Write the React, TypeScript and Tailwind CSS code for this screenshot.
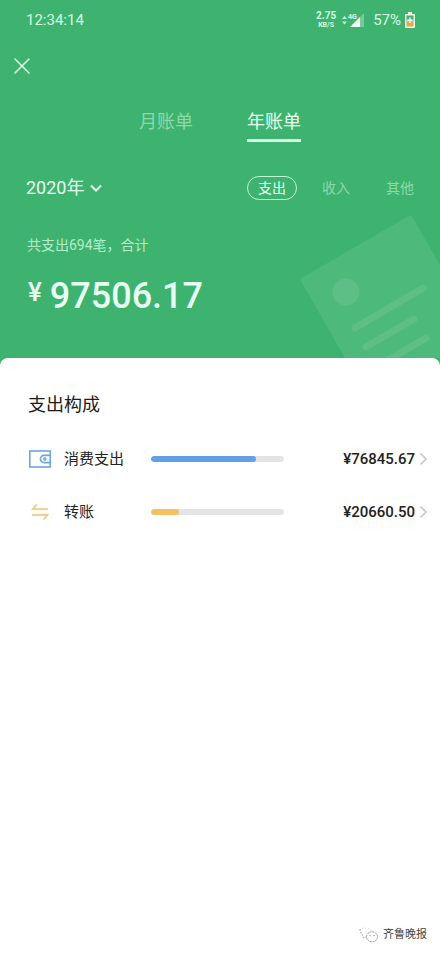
import { useState } from 'react';

interface Category {
  id: string;
  label: string;
  amount: string;
  percent: number;
  barClass: string;
  icon: React.ReactNode;
}

const WalletIcon = () => (
  <svg width="24" height="20" viewBox="0 0 24 20" fill="none" stroke="#6aa6df" strokeWidth="1.6" aria-hidden="true">
    <rect x="1.8" y="2" width="20.4" height="16" />
    <path d="M22 6.4h-6a3.6 3.6 0 0 0 0 7.2H22" />
    <circle cx="16.8" cy="10" r="1.7" fill="#6aa6df" stroke="none" />
  </svg>
);

const TransferIcon = () => (
  <svg width="24" height="20" viewBox="0 0 24 20" fill="none" stroke="#f0cc80" strokeWidth="1.8" aria-hidden="true">
    <path d="M8.6 2.2 4.8 7.2H20" />
    <path d="M4 12.8h15.4l-3.8 5" />
  </svg>
);

const categories: Category[] = [
  {
    id: 'spending',
    label: '消费支出',
    amount: '¥76845.67',
    percent: 78.8,
    barClass: 'bg-[#629fe6]',
    icon: <WalletIcon />,
  },
  {
    id: 'transfer',
    label: '转账',
    amount: '¥20660.50',
    percent: 21.2,
    barClass: 'bg-[#f2c262]',
    icon: <TransferIcon />,
  },
];

const periods = ['月账单', '年账单'];
const types = ['支出', '收入', '其他'];

const StatusBar = () => (
  <div className="flex h-10 items-center pl-[26px] pr-[25px] text-[15px] leading-5 text-[#d5fbe2]">
    <span>12:34:14</span>
    <div className="ml-auto flex items-center">
      <div className="text-center font-bold">
        <div className="text-[10px] leading-[10px]">2.75</div>
        <div className="text-[7px] leading-[8px]">KB/S</div>
      </div>
      <svg className="ml-1.5" width="23" height="16" viewBox="0 0 23 16" aria-hidden="true">
        <path d="M0 7l2.5-3L5 7zM0 9.5l2.5 3 2.5-3z" fill="#bff0d0" />
        <path d="M22 1v14H8z" fill="#fff" fillOpacity="0.3" />
        <path d="M18 5v10H8z" fill="#f0fff5" />
        <text x="6" y="6.5" fontSize="7" fontWeight="700" fill="#e3ffec">4G</text>
      </svg>
      <span className="ml-2">57%</span>
      <svg className="ml-1" width="10" height="16" viewBox="0 0 10 16" aria-hidden="true">
        <path d="M3 0h4v2h2a1 1 0 0 1 1 1v12a1 1 0 0 1-1 1H1a1 1 0 0 1-1-1V3a1 1 0 0 1 1-1h2z" fill="#e8fbe4" />
        <path d="M1.5 3.5h7v6h-7z" fill="#3eb370" />
        <path d="M1.5 9.5h7v5h-7z" fill="#e6a550" />
        <path d="M4.3 5.5h1.4v2h2v1.6h-2v2H4.3v-2h-2V7.5h2z" fill="#fff" />
      </svg>
    </div>
  </div>
);

const CardIllustration = () => (
  <svg className="absolute bottom-0 right-0" width="140" height="143" viewBox="0 0 140 143" aria-hidden="true">
    <path d="M2.5 62.5 109 .8q2-1 3.2 1L140 50v93H45L1 66q-1-2 1.5-3.5z" fill="#fff" fillOpacity="0.08" />
    <circle cx="46" cy="77" r="13.5" fill="#fff" fillOpacity="0.09" />
    <g stroke="#fff" strokeOpacity="0.09" strokeWidth="7" strokeLinecap="round">
      <path d="M55 113 123 73" />
      <path d="M66 132 114 104" />
      <path d="M78 151 126 123" />
    </g>
  </svg>
);

const WatermarkIcon = () => (
  <svg width="20" height="16" viewBox="0 0 20 16" fill="none" stroke="#8a8a8a" strokeWidth="0.9" aria-hidden="true">
    <path d="M1 2c0 3 1 5 3.5 7L4 11l2.5-1" strokeDasharray="1.5 1.5" />
    <path d="M3 1.5C6 .5 10 1 12 4" stroke="#c4c4c4" strokeDasharray="1 2" />
    <ellipse cx="13" cy="9.8" rx="5.5" ry="5" fill="#fff" strokeDasharray="2 0.7" />
    <circle cx="11" cy="8.6" r="0.6" fill="#777" stroke="none" />
    <circle cx="15" cy="8.6" r="0.6" fill="#777" stroke="none" />
  </svg>
);

const App = () => {
  const [period, setPeriod] = useState('年账单');
  const [type, setType] = useState('支出');

  return (
    <div className="flex min-h-screen flex-col bg-[#3eb370] font-[Roboto,'Noto_Sans_CJK_SC',sans-serif]">
      <header className="relative pb-[42px] text-[#e6fff0]">
        <CardIllustration />
        <StatusBar />

        <div className="flex h-[52px] items-center pl-3">
          <button type="button" aria-label="关闭" className="p-0.5">
            <svg width="16" height="16" viewBox="0 0 16 16" stroke="#e0ffeb" strokeWidth="1.5" strokeLinecap="round">
              <path d="M1 1l14 14M15 1 1 15" />
            </svg>
          </button>
        </div>

        <nav className="mt-4 flex justify-center gap-[54px]">
          {periods.map((item) => (
            <button
              key={item}
              type="button"
              onClick={() => setPeriod(item)}
              className={
                period === item
                  ? 'border-b-[3px] border-[#d5fbe2] pb-[3px] text-lg leading-7'
                  : 'border-b-[3px] border-transparent pb-[3px] text-lg leading-7 text-[#8ed8aa]'
              }
            >
              {item}
            </button>
          ))}
        </nav>

        <div className="mt-[34px] flex h-6 items-center justify-between pl-[26px] pr-[15px]">
          <button type="button" className="flex items-center gap-1.5 text-lg leading-6">
            2020年
            <svg width="12" height="8" viewBox="0 0 12 8" fill="none" stroke="currentColor" strokeWidth="2" aria-hidden="true">
              <path d="M1 1.5l5 5 5-5" />
            </svg>
          </button>
          <div className="flex gap-[14px] text-sm">
            {types.map((item) => (
              <button
                key={item}
                type="button"
                onClick={() => setType(item)}
                className={
                  type === item
                    ? 'h-6 w-[50px] rounded-full border border-[#c4f5d5] leading-5'
                    : 'h-6 w-[50px] rounded-full border border-transparent leading-5 text-[#8ed8aa]'
                }
              >
                {item}
              </button>
            ))}
          </div>
        </div>

        <p className="mt-[35px] pl-[27px] text-sm leading-5 text-[#b5ecc8]">共支出694笔，合计</p>
        <p className="mt-[21px] flex items-start gap-2 pl-7 font-medium">
          <span className="text-[26px] leading-8">¥</span>
          <span className="text-[36px] leading-10">97506.17</span>
        </p>
      </header>

      <main className="flex flex-1 flex-col rounded-t-lg bg-white pt-[35px]">
        <h2 className="pl-7 text-lg leading-6 text-[#1c1c1c]">支出构成</h2>
        <ul className="mt-[15px]">
          {categories.map((category) => (
            <li key={category.id}>
              <button type="button" className="flex h-[53px] w-full items-center pl-7 pr-3 text-[15px] leading-5 text-[#222]">
                {category.icon}
                <span className="ml-3 w-[87px] text-left">{category.label}</span>
                <span className="h-1.5 flex-1 overflow-hidden rounded-full bg-[#e4e4e4]">
                  <span
                    className={`block h-full rounded-full ${category.barClass}`}
                    style={{ width: `${category.percent}%` }}
                  />
                </span>
                <span className="w-[131px] text-right font-medium">{category.amount}</span>
                <svg className="ml-1" width="9" height="14" viewBox="0 0 9 14" fill="none" stroke="#c8c8c8" strokeWidth="1.7" aria-hidden="true">
                  <path d="M1.5 1.5 7 7l-5.5 5.5" />
                </svg>
              </button>
            </li>
          ))}
        </ul>

        <footer className="mt-auto flex items-center justify-end gap-1 pb-2 pr-[13px] text-[11px] leading-5 text-[#444]">
          <WatermarkIcon />
          <span>齐鲁晚报</span>
        </footer>
      </main>
    </div>
  );
};

export default App;
